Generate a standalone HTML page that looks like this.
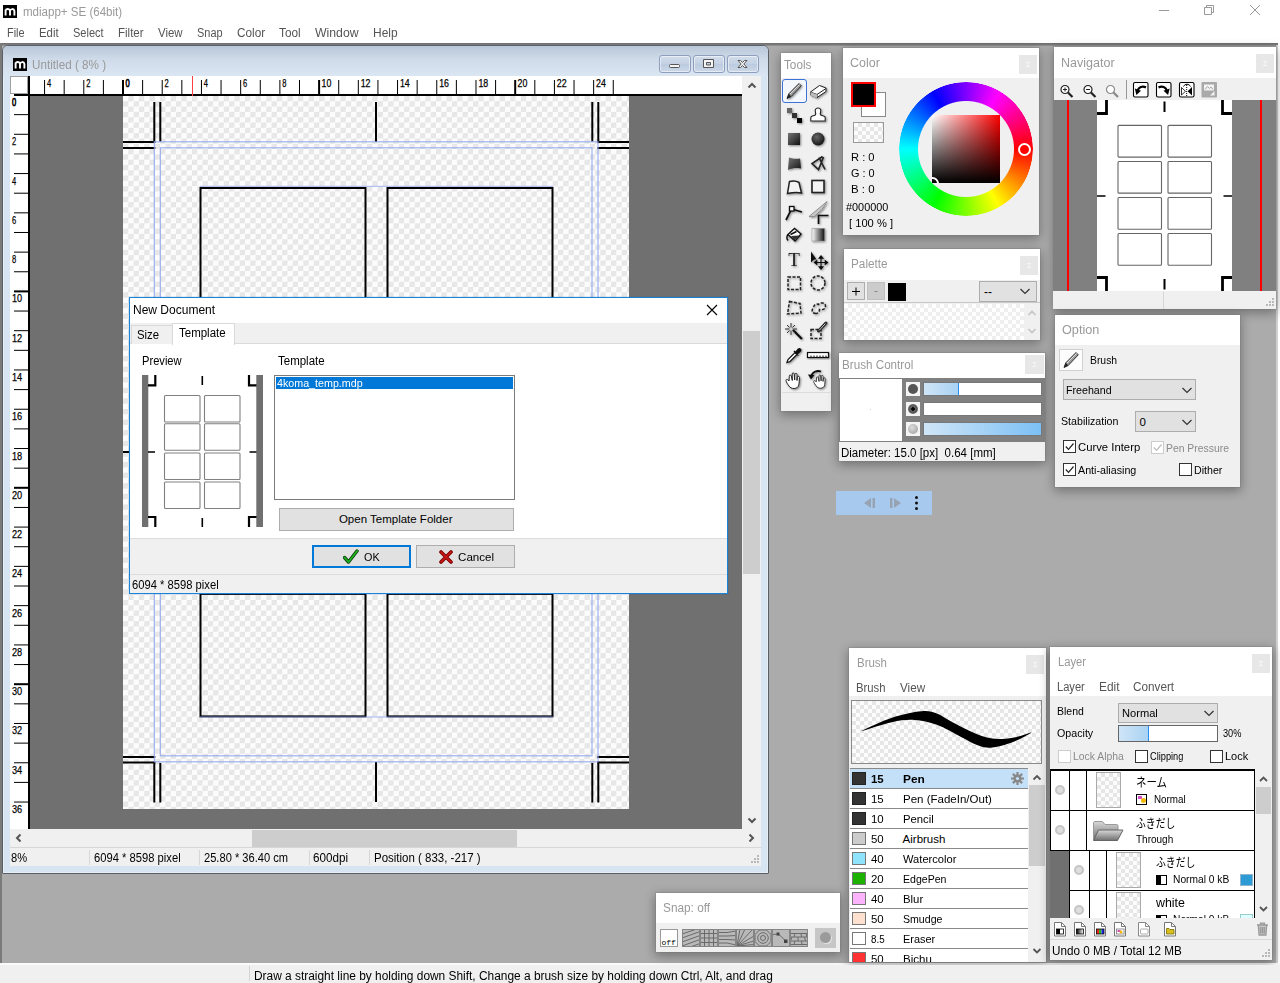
<!DOCTYPE html><html><head><meta charset="utf-8"><title>mdiapp+ SE (64bit)</title><style>
*{box-sizing:border-box;margin:0;padding:0}
html,body{width:1280px;height:983px;overflow:hidden;background:#fff}
body{position:relative;font-family:"Liberation Sans","Noto Sans CJK JP",sans-serif;font-size:12px;color:#000;line-height:1}
.a{position:absolute}
.t{position:absolute;white-space:nowrap;line-height:14px;height:14px}
.panel{position:absolute;background:#f0f0f0;box-shadow:0 0 0 1px rgba(120,120,120,.3),0 3px 10px 1px rgba(0,0,0,.33)}
.pbtn{position:absolute;width:18px;height:19px;background:#e6e6e6}
.combo{position:absolute;background:#e1e1e1;border:1px solid #adadad}
.cb{position:absolute;width:13px;height:13px;background:#fff;border:1px solid #333}
.checker{background-color:#fcfcfc;background-image:linear-gradient(45deg,#e6e6e6 25%,transparent 25%,transparent 75%,#e6e6e6 75%),linear-gradient(45deg,#e6e6e6 25%,transparent 25%,transparent 75%,#e6e6e6 75%)}
</style></head><body>
<svg class="a" style="left:3px;top:5px" width="14" height="13" viewBox="0 0 14 13"><rect width="14" height="13" fill="#000"/><path d="M2.6 10.5V4.6M2.6 5.6C3.2 3.6 6.6 3.4 7 5.8V10.5M7 5.8C7.6 3.6 11 3.4 11.4 5.8V10.5" fill="none" stroke="#fff" stroke-width="1.9"/></svg>
<div class="t" style="left:22.9px;top:5px;font-size:12px;transform-origin:0 0;transform:scaleX(0.962);color:#999">mdiapp+ SE (64bit)</div>
<svg class="a" style="left:1150px;top:0" width="130" height="22" viewBox="0 0 130 22"><g fill="none" stroke="#999" stroke-width="1"><path d="M9 10.5H19"/><path d="M54.5 7.5H61.500V14.5H54.5Z"/><path d="M56.500 7.500V5.500H63.500V12.500H61.500"/><path d="M100 5L110 15M110 5L100 15"/></g></svg>
<div class="t" style="left:6.9px;top:26px;font-size:12px;transform-origin:0 0;transform:scaleX(0.910);color:#555">File</div>
<div class="t" style="left:38.9px;top:26px;font-size:12px;transform-origin:0 0;transform:scaleX(0.948);color:#555">Edit</div>
<div class="t" style="left:72.9px;top:26px;font-size:12px;transform-origin:0 0;transform:scaleX(0.917);color:#555">Select</div>
<div class="t" style="left:117.9px;top:26px;font-size:12px;transform-origin:0 0;transform:scaleX(0.960);color:#555">Filter</div>
<div class="t" style="left:157.9px;top:26px;font-size:12px;transform-origin:0 0;transform:scaleX(0.954);color:#555">View</div>
<div class="t" style="left:196.9px;top:26px;font-size:12px;transform-origin:0 0;transform:scaleX(0.913);color:#555">Snap</div>
<div class="t" style="left:236.9px;top:26px;font-size:12px;transform-origin:0 0;transform:scaleX(0.980);color:#555">Color</div>
<div class="t" style="left:278.9px;top:26px;font-size:12px;transform-origin:0 0;transform:scaleX(0.981);color:#555">Tool</div>
<div class="t" style="left:314.9px;top:26px;font-size:12px;transform-origin:0 0;transform:scaleX(1.022);color:#555">Window</div>
<div class="t" style="left:372.9px;top:26px;font-size:12px;transform-origin:0 0;transform:scaleX(0.997);color:#555">Help</div>
<div class="a" style="left:0px;top:43px;width:1278px;height:920px;background:#ababab"></div>
<div class="a" style="left:0px;top:43px;width:1278px;height:3px;background:linear-gradient(#6e6e6e,#7c7c7c 60%,#9a9a9a)"></div>
<div class="a" style="left:0px;top:43px;width:2px;height:921px;background:#7a7a7a"></div>
<div class="a" style="left:1276px;top:45px;width:2px;height:919px;background:#d0d0d0"></div>
<div class="a" style="left:0px;top:963px;width:1280px;height:2px;background:#fafafa"></div>
<div class="a" style="left:2px;top:45px;width:767px;height:829px;background:#d7e4f2;border:1px solid #5a5f66;border-radius:6px 6px 1px 1px;box-shadow:0 0 0 1px rgba(255,255,255,.35) inset"></div>
<div class="a" style="left:3px;top:46px;width:765px;height:30px;background:linear-gradient(#b8c7d9,#cfdbe9 45%,#dbe6f3);border-radius:5px 5px 0 0"></div>
<svg class="a" style="left:13px;top:58px" width="14" height="13" viewBox="0 0 14 13"><rect width="14" height="13" fill="#000"/><path d="M2.6 10.5V4.6M2.6 5.6C3.2 3.6 6.6 3.4 7 5.8V10.5M7 5.8C7.6 3.6 11 3.4 11.4 5.8V10.5" fill="none" stroke="#fff" stroke-width="1.9"/></svg>
<div class="t" style="left:31.9px;top:58px;font-size:12px;transform-origin:0 0;transform:scaleX(0.975);color:#999">Untitled ( 8% )</div>
<div class="a" style="left:659px;top:55px;width:32px;height:18px;border:1px solid #8e9fbd;border-radius:3px;background:linear-gradient(#d3deec,#c3d1e3 50%,#bccbdf 51%,#cbd8e8);box-shadow:0 0 0 1px rgba(255,255,255,.5) inset"></div>
<div class="a" style="left:693px;top:55px;width:32px;height:18px;border:1px solid #8e9fbd;border-radius:3px;background:linear-gradient(#d3deec,#c3d1e3 50%,#bccbdf 51%,#cbd8e8);box-shadow:0 0 0 1px rgba(255,255,255,.5) inset"></div>
<div class="a" style="left:727px;top:55px;width:32px;height:18px;border:1px solid #8e9fbd;border-radius:3px;background:linear-gradient(#d3deec,#c3d1e3 50%,#bccbdf 51%,#cbd8e8);box-shadow:0 0 0 1px rgba(255,255,255,.5) inset"></div>
<svg class="a" style="left:659px;top:55px" width="100" height="18" viewBox="0 0 100 18" ><g fill="#f4f4f4" stroke="#555" stroke-width="1"><rect x="10.5" y="9.500" width="10" height="3" rx="1"/><path d="M44.500 4.500h10v8h-10zM47.500 7.500h4v2.500h-4z" fill-rule="evenodd"/><path d="M79 5.500h2.500l2 2 2-2h2.500l-3.200 3.500 3.200 3.500h-2.500l-2-2-2 2h-2.500l3.200-3.500z"/></g></svg>
<div class="a" style="left:10px;top:76px;width:751px;height:790px;background:#f0f0f0"></div>
<div class="a" style="left:30px;top:96px;width:712px;height:733px;background:#707070"></div>
<div class="a checker" style="left:123px;top:96px;width:506px;height:713px;background-size:10.62px 10.62px;background-position:0 0,5.31px 5.31px;overflow:hidden">
<svg class="a" style="left:0;top:0" width="506" height="713" viewBox="0 0 506 713"><rect x="30.30000000000001" y="6" width="2" height="41" fill="#000"/><rect x="36.30000000000001" y="6" width="2" height="39.6" fill="#000"/><rect x="0" y="45" width="32.3" height="2" fill="#000"/><rect x="0" y="51" width="32.3" height="2" fill="#000"/><rect x="468.29999999999995" y="6" width="2" height="39.6" fill="#000"/><rect x="474.29999999999995" y="6" width="2" height="41" fill="#000"/><rect x="474.29999999999995" y="45" width="32" height="2" fill="#000"/><rect x="474.29999999999995" y="51" width="32" height="2" fill="#000"/><rect x="30.30000000000001" y="665.5" width="2" height="41" fill="#000"/><rect x="36.30000000000001" y="666.9" width="2" height="39.6" fill="#000"/><rect x="0" y="665.5" width="32.3" height="2" fill="#000"/><rect x="0" y="660" width="32.3" height="2" fill="#000"/><rect x="468.29999999999995" y="666.9" width="2" height="39.6" fill="#000"/><rect x="474.29999999999995" y="665.5" width="2" height="41" fill="#000"/><rect x="474.29999999999995" y="665.5" width="32" height="2" fill="#000"/><rect x="474.29999999999995" y="660" width="32" height="2" fill="#000"/><rect x="252" y="6" width="2" height="40" fill="#000"/><rect x="252" y="666" width="2" height="40" fill="#000"/><rect x="0" y="355" width="32" height="2" fill="#000"/><rect x="474.29999999999995" y="355" width="32" height="2" fill="#000"/><rect x="31.30000000000001" y="45.80000000000001" width="443.7" height="620.0" fill="none" stroke="#8ea6f0" stroke-width="1.15" opacity=".9"/><rect x="37.30000000000001" y="51.80000000000001" width="431.7" height="608.0" fill="none" stroke="#8ea6f0" stroke-width="1.15" opacity=".9"/><rect x="77.5" y="92.0" width="165" height="122.5" fill="none" stroke="#000" stroke-width="2"/><rect x="264.5" y="92.0" width="165" height="122.5" fill="none" stroke="#000" stroke-width="2"/><rect x="77.5" y="227.3" width="165" height="122.5" fill="none" stroke="#000" stroke-width="2"/><rect x="264.5" y="227.3" width="165" height="122.5" fill="none" stroke="#000" stroke-width="2"/><rect x="77.5" y="362.6" width="165" height="122.5" fill="none" stroke="#000" stroke-width="2"/><rect x="264.5" y="362.6" width="165" height="122.5" fill="none" stroke="#000" stroke-width="2"/><rect x="77.5" y="497.9000000000001" width="165" height="122.5" fill="none" stroke="#000" stroke-width="2"/><rect x="264.5" y="497.9000000000001" width="165" height="122.5" fill="none" stroke="#000" stroke-width="2"/><path d="M77 90.30000000000001H430M77 621H430" stroke="#8ea6f0" stroke-width="1" fill="none" opacity=".8"/></svg>
</div>
<div class="a" style="left:10px;top:76px;width:732px;height:20px;background:#fff"></div>
<div class="a" style="left:10px;top:76px;width:20px;height:753px;background:#fff"></div>
<div class="a" style="left:10px;top:76px;width:18px;height:18px;background:#fff;border:1px solid #a0a0a0"></div>
<div class="a" style="left:14px;top:94px;width:728px;height:2px;background:#000"></div>
<div class="a" style="left:28px;top:76px;width:2px;height:753px;background:#000"></div>
<svg class="a" style="left:10px;top:76px;font-family:'Liberation Sans',sans-serif" width="733" height="20" viewBox="0 0 733 20"><rect x="34.06" y="4" width="1" height="14" fill="#000"/><text x="36.96" y="10.6" font-size="11" stroke="#000" stroke-width="0.25" textLength="4.2" lengthAdjust="spacingAndGlyphs">4</text><rect x="53.67" y="4" width="1" height="14" fill="#000"/><rect x="73.28" y="4" width="1" height="14" fill="#000"/><text x="76.18" y="10.6" font-size="11" stroke="#000" stroke-width="0.25" textLength="4.2" lengthAdjust="spacingAndGlyphs">2</text><rect x="92.89" y="4" width="1" height="14" fill="#000"/><rect x="112.00" y="4" width="2" height="14" fill="#000"/><text x="115.40" y="10.6" font-size="11" stroke="#000" stroke-width="0.7" textLength="4.2" lengthAdjust="spacingAndGlyphs">0</text><rect x="132.11" y="4" width="1" height="14" fill="#000"/><rect x="151.72" y="4" width="1" height="14" fill="#000"/><text x="154.62" y="10.6" font-size="11" stroke="#000" stroke-width="0.25" textLength="4.2" lengthAdjust="spacingAndGlyphs">2</text><rect x="171.33" y="4" width="1" height="14" fill="#000"/><rect x="190.94" y="4" width="1" height="14" fill="#000"/><text x="193.84" y="10.6" font-size="11" stroke="#000" stroke-width="0.25" textLength="4.2" lengthAdjust="spacingAndGlyphs">4</text><rect x="210.55" y="4" width="1" height="14" fill="#000"/><rect x="230.16" y="4" width="1" height="14" fill="#000"/><text x="233.06" y="10.6" font-size="11" stroke="#000" stroke-width="0.25" textLength="4.2" lengthAdjust="spacingAndGlyphs">6</text><rect x="249.77" y="4" width="1" height="14" fill="#000"/><rect x="269.38" y="4" width="1" height="14" fill="#000"/><text x="272.28" y="10.6" font-size="11" stroke="#000" stroke-width="0.25" textLength="4.2" lengthAdjust="spacingAndGlyphs">8</text><rect x="288.99" y="4" width="1" height="14" fill="#000"/><rect x="308.10" y="4" width="2" height="14" fill="#000"/><text x="311.50" y="10.6" font-size="11" stroke="#000" stroke-width="0.25" textLength="9.8" lengthAdjust="spacingAndGlyphs">10</text><rect x="328.21" y="4" width="1" height="14" fill="#000"/><rect x="347.82" y="4" width="1" height="14" fill="#000"/><text x="350.72" y="10.6" font-size="11" stroke="#000" stroke-width="0.25" textLength="9.8" lengthAdjust="spacingAndGlyphs">12</text><rect x="367.43" y="4" width="1" height="14" fill="#000"/><rect x="387.04" y="4" width="1" height="14" fill="#000"/><text x="389.94" y="10.6" font-size="11" stroke="#000" stroke-width="0.25" textLength="9.8" lengthAdjust="spacingAndGlyphs">14</text><rect x="406.65" y="4" width="1" height="14" fill="#000"/><rect x="426.26" y="4" width="1" height="14" fill="#000"/><text x="429.16" y="10.6" font-size="11" stroke="#000" stroke-width="0.25" textLength="9.8" lengthAdjust="spacingAndGlyphs">16</text><rect x="445.87" y="4" width="1" height="14" fill="#000"/><rect x="465.48" y="4" width="1" height="14" fill="#000"/><text x="468.38" y="10.6" font-size="11" stroke="#000" stroke-width="0.25" textLength="9.8" lengthAdjust="spacingAndGlyphs">18</text><rect x="485.09" y="4" width="1" height="14" fill="#000"/><rect x="504.20" y="4" width="2" height="14" fill="#000"/><text x="507.60" y="10.6" font-size="11" stroke="#000" stroke-width="0.25" textLength="9.8" lengthAdjust="spacingAndGlyphs">20</text><rect x="524.31" y="4" width="1" height="14" fill="#000"/><rect x="543.92" y="4" width="1" height="14" fill="#000"/><text x="546.82" y="10.6" font-size="11" stroke="#000" stroke-width="0.25" textLength="9.8" lengthAdjust="spacingAndGlyphs">22</text><rect x="563.53" y="4" width="1" height="14" fill="#000"/><rect x="583.14" y="4" width="1" height="14" fill="#000"/><text x="586.04" y="10.6" font-size="11" stroke="#000" stroke-width="0.25" textLength="9.8" lengthAdjust="spacingAndGlyphs">24</text><rect x="602.75" y="4" width="1" height="14" fill="#000"/><rect x="182" y="0" width="1" height="20" fill="#ff4040"/></svg>
<svg class="a" style="left:10px;top:76px;font-family:'Liberation Sans',sans-serif" width="18" height="753" viewBox="0 0 18 753"><text x="2" y="30.00" font-size="11" stroke="#000" stroke-width="0.7" textLength="4.2" lengthAdjust="spacingAndGlyphs">0</text><rect x="4" y="38.14" width="14" height="1" fill="#000"/><rect x="4" y="57.78" width="14" height="1" fill="#000"/><text x="2" y="69.28" font-size="11" stroke="#000" stroke-width="0.25" textLength="4.2" lengthAdjust="spacingAndGlyphs">2</text><rect x="4" y="77.42" width="14" height="1" fill="#000"/><rect x="4" y="97.06" width="14" height="1" fill="#000"/><text x="2" y="108.56" font-size="11" stroke="#000" stroke-width="0.25" textLength="4.2" lengthAdjust="spacingAndGlyphs">4</text><rect x="4" y="116.70" width="14" height="1" fill="#000"/><rect x="4" y="136.34" width="14" height="1" fill="#000"/><text x="2" y="147.84" font-size="11" stroke="#000" stroke-width="0.25" textLength="4.2" lengthAdjust="spacingAndGlyphs">6</text><rect x="4" y="155.98" width="14" height="1" fill="#000"/><rect x="4" y="175.62" width="14" height="1" fill="#000"/><text x="2" y="187.12" font-size="11" stroke="#000" stroke-width="0.25" textLength="4.2" lengthAdjust="spacingAndGlyphs">8</text><rect x="4" y="195.26" width="14" height="1" fill="#000"/><rect x="4" y="214.40" width="14" height="2" fill="#000"/><text x="2" y="226.40" font-size="11" stroke="#000" stroke-width="0.25" textLength="10.2" lengthAdjust="spacingAndGlyphs">10</text><rect x="4" y="234.54" width="14" height="1" fill="#000"/><rect x="4" y="254.18" width="14" height="1" fill="#000"/><text x="2" y="265.68" font-size="11" stroke="#000" stroke-width="0.25" textLength="10.2" lengthAdjust="spacingAndGlyphs">12</text><rect x="4" y="273.82" width="14" height="1" fill="#000"/><rect x="4" y="293.46" width="14" height="1" fill="#000"/><text x="2" y="304.96" font-size="11" stroke="#000" stroke-width="0.25" textLength="10.2" lengthAdjust="spacingAndGlyphs">14</text><rect x="4" y="313.10" width="14" height="1" fill="#000"/><rect x="4" y="332.74" width="14" height="1" fill="#000"/><text x="2" y="344.24" font-size="11" stroke="#000" stroke-width="0.25" textLength="10.2" lengthAdjust="spacingAndGlyphs">16</text><rect x="4" y="352.38" width="14" height="1" fill="#000"/><rect x="4" y="372.02" width="14" height="1" fill="#000"/><text x="2" y="383.52" font-size="11" stroke="#000" stroke-width="0.25" textLength="10.2" lengthAdjust="spacingAndGlyphs">18</text><rect x="4" y="391.66" width="14" height="1" fill="#000"/><rect x="4" y="410.80" width="14" height="2" fill="#000"/><text x="2" y="422.80" font-size="11" stroke="#000" stroke-width="0.25" textLength="10.2" lengthAdjust="spacingAndGlyphs">20</text><rect x="4" y="430.94" width="14" height="1" fill="#000"/><rect x="4" y="450.58" width="14" height="1" fill="#000"/><text x="2" y="462.08" font-size="11" stroke="#000" stroke-width="0.25" textLength="10.2" lengthAdjust="spacingAndGlyphs">22</text><rect x="4" y="470.22" width="14" height="1" fill="#000"/><rect x="4" y="489.86" width="14" height="1" fill="#000"/><text x="2" y="501.36" font-size="11" stroke="#000" stroke-width="0.25" textLength="10.2" lengthAdjust="spacingAndGlyphs">24</text><rect x="4" y="509.50" width="14" height="1" fill="#000"/><rect x="4" y="529.14" width="14" height="1" fill="#000"/><text x="2" y="540.64" font-size="11" stroke="#000" stroke-width="0.25" textLength="10.2" lengthAdjust="spacingAndGlyphs">26</text><rect x="4" y="548.78" width="14" height="1" fill="#000"/><rect x="4" y="568.42" width="14" height="1" fill="#000"/><text x="2" y="579.92" font-size="11" stroke="#000" stroke-width="0.25" textLength="10.2" lengthAdjust="spacingAndGlyphs">28</text><rect x="4" y="588.06" width="14" height="1" fill="#000"/><rect x="4" y="607.20" width="14" height="2" fill="#000"/><text x="2" y="619.20" font-size="11" stroke="#000" stroke-width="0.25" textLength="10.2" lengthAdjust="spacingAndGlyphs">30</text><rect x="4" y="627.34" width="14" height="1" fill="#000"/><rect x="4" y="646.98" width="14" height="1" fill="#000"/><text x="2" y="658.48" font-size="11" stroke="#000" stroke-width="0.25" textLength="10.2" lengthAdjust="spacingAndGlyphs">32</text><rect x="4" y="666.62" width="14" height="1" fill="#000"/><rect x="4" y="686.26" width="14" height="1" fill="#000"/><text x="2" y="697.76" font-size="11" stroke="#000" stroke-width="0.25" textLength="10.2" lengthAdjust="spacingAndGlyphs">34</text><rect x="4" y="705.90" width="14" height="1" fill="#000"/><rect x="4" y="725.54" width="14" height="1" fill="#000"/><text x="2" y="737.04" font-size="11" stroke="#000" stroke-width="0.25" textLength="10.2" lengthAdjust="spacingAndGlyphs">36</text></svg>
<div class="a" style="left:742px;top:76px;width:19px;height:753px;background:#f0f0f0"></div>
<div class="a" style="left:743px;top:331px;width:17px;height:243px;background:#cdcdcd"></div>
<div class="a" style="left:10px;top:829px;width:751px;height:18px;background:#f0f0f0"></div>
<div class="a" style="left:252px;top:830px;width:265px;height:17px;background:#cdcdcd"></div>
<svg class="a" style="left:743px;top:76px" width="18" height="753" viewBox="0 0 18 753" ><path d="M5.500 11.500l3.500-3.500 3.500 3.500M5.500 742.500l3.500 3.500 3.500-3.500" fill="none" stroke="#555" stroke-width="2"/></svg>
<svg class="a" style="left:10px;top:829px" width="751" height="18" viewBox="0 0 751 18" ><path d="M10.500 5.500l-3.500 3.500 3.500 3.500M739.500 5.500l3.500 3.500-3.500 3.500" fill="none" stroke="#555" stroke-width="2"/></svg>
<div class="a" style="left:10px;top:847px;width:751px;height:1px;background:#d7d7d7"></div>
<div class="a" style="left:89px;top:850px;width:1px;height:15px;background:#d7d7d7"></div>
<div class="a" style="left:199px;top:850px;width:1px;height:15px;background:#d7d7d7"></div>
<div class="a" style="left:309px;top:850px;width:1px;height:15px;background:#d7d7d7"></div>
<div class="a" style="left:369px;top:850px;width:1px;height:15px;background:#d7d7d7"></div>
<div class="t" style="left:11.4px;top:851px;font-size:12px;transform-origin:0 0;transform:scaleX(0.928);">8%</div>
<div class="t" style="left:93.9px;top:851px;font-size:12px;transform-origin:0 0;transform:scaleX(0.934);">6094 * 8598 pixel</div>
<div class="t" style="left:203.9px;top:851px;font-size:12px;transform-origin:0 0;transform:scaleX(0.927);">25.80 * 36.40 cm</div>
<div class="t" style="left:313.4px;top:851px;font-size:12px;transform-origin:0 0;transform:scaleX(0.974);">600dpi</div>
<div class="t" style="left:373.9px;top:851px;font-size:12px;transform-origin:0 0;transform:scaleX(0.957);">Position ( 833, -217 )</div>
<svg class="a" style="left:749px;top:854px" width="12" height="12" viewBox="0 0 12 12" ><g fill="#b8b8b8"><rect x="8" y="1" width="2" height="2"/><rect x="5" y="4" width="2" height="2"/><rect x="8" y="4" width="2" height="2"/><rect x="2" y="7" width="2" height="2"/><rect x="5" y="7" width="2" height="2"/><rect x="8" y="7" width="2" height="2"/></g></svg>
<div class="panel" style="left:781px;top:53px;width:50px;height:358px;"></div>
<div class="a" style="left:781px;top:53px;width:50px;height:25px;background:#fff"></div>
<div class="t" style="left:784.1px;top:58px;font-size:12px;transform-origin:0 0;transform:scaleX(0.978);color:#999">Tools</div>
<div class="a" style="left:782px;top:79px;width:25px;height:24px;border:1px solid #3a72d8;border-radius:3px;background:#f4f7fc"></div>
<div class="a" style="left:782px;top:392px;width:48px;height:1px;background:#dcdcdc"></div>
<svg class="a" style="left:781px;top:53px" width="50" height="359" viewBox="0 0 50 359" ><defs><filter id="ds" x="-30%" y="-30%" width="170%" height="170%"><feGaussianBlur in="SourceAlpha" stdDeviation="0.9"/><feOffset dx="1" dy="1.2"/><feComponentTransfer><feFuncA type="linear" slope=".45"/></feComponentTransfer><feMerge><feMergeNode/><feMergeNode in="SourceGraphic"/></feMerge></filter><linearGradient id="gsq" x1="0" y1="0" x2="1" y2="1"><stop offset="0" stop-color="#777"/><stop offset="1" stop-color="#111"/></linearGradient><radialGradient id="gci" cx=".4" cy=".35" r=".7"><stop offset="0" stop-color="#666"/><stop offset="1" stop-color="#111"/></radialGradient><linearGradient id="ggr" x1="0" y1="0" x2="1" y2="0"><stop offset="0" stop-color="#fff"/><stop offset="1" stop-color="#111"/></linearGradient></defs><g transform="translate(3,28)"><g filter="url(#ds)"><path d="M3 17.500l1.800-4.700L15 2.500l2.300 2.300L7.200 15.500z" fill="#9a9a9a" stroke="#222" stroke-width=".9"/><path d="M5.800 13.200L15.600 3.400" stroke="#e8e8e8" stroke-width=".9"/><path d="M3 17.500l1.800-4.700 2.400 2.700z" fill="#222"/></g></g><g transform="translate(27,28)"><g filter="url(#ds)"><path d="M2.500 11l9-6.500 6.500 2.500v3.500l-9 6-6.500-2.500z" fill="#fff" stroke="#222" stroke-width="1"/><path d="M2.500 11l6.500 2.500 9-6M9 13.500v3.500" fill="none" stroke="#222" stroke-width="1"/><path d="M2.500 11l6.500 2.500v3.500l-6.500-2.500z" fill="#bbb"/></g></g><g transform="translate(3,52)"><g filter="url(#ds)"><rect x="3" y="3" width="5" height="5" fill="#666"/><rect x="8" y="8" width="5" height="5" fill="#333"/><rect x="13" y="13" width="5" height="5" fill="#000"/></g></g><g transform="translate(27,52)"><g filter="url(#ds)"><path d="M10 3c2.500 0 3.200 2 2.600 3.800-.5 1.500-.9 2.700.6 3.400l3 1c.8.300 1 .9 1 1.800v3H2.800v-3c0-.9.200-1.500 1-1.800l3-1c1.500-.7 1.100-1.900.6-3.400C6.800 5 7.500 3 10 3z" fill="#fff" stroke="#222" stroke-width="1.1"/></g></g><g transform="translate(3,76)"><g filter="url(#ds)"><rect x="4" y="4" width="12" height="12" fill="url(#gsq)"/></g></g><g transform="translate(27,76)"><g filter="url(#ds)"><circle cx="10" cy="10" r="6.500" fill="url(#gci)"/></g></g><g transform="translate(3,100)"><g filter="url(#ds)"><path d="M5 4.500c4 1.500 7 1.500 11 1l1 10c-4-.8-9-.5-13 1.500z" fill="url(#gsq)"/></g></g><g transform="translate(27,100)"><g filter="url(#ds)"><path d="M14.500 3.500L4 10.500l6.500 6L15.500 4M11 4.500l6 12" fill="none" stroke="#222" stroke-width="1.600"/></g></g><g transform="translate(3,124)"><g filter="url(#ds)"><path d="M5.500 4.500c4-1 7-.5 9.500 1l2.500 10.500c-5-1-9-.5-14 .5z" fill="#f4f4f4" stroke="#222" stroke-width="1.500"/></g></g><g transform="translate(27,124)"><g filter="url(#ds)"><rect x="4" y="3.500" width="12" height="12" fill="#f4f4f4" stroke="#222" stroke-width="1.600"/></g></g><g transform="translate(3,148)"><g filter="url(#ds)"><path d="M2 19L7.500 8l10.500 3" fill="none" stroke="#111" stroke-width="1.700"/><rect x="5.500" y="5.500" width="4.500" height="4.500" fill="#fff" stroke="#111" stroke-width="1.300"/></g></g><g transform="translate(27,148)"><g filter="url(#ds)"><path d="M1 15.500L19 .5l-4.500 7.500-8 7.500z" fill="#c4c4c4" stroke="#777" stroke-width=".7"/><path d="M10.500 23v-8.500h10" fill="none" stroke="#111" stroke-width="1.700"/></g></g><g transform="translate(3,172)"><g filter="url(#ds)"><path d="M4 9.500L10.500 3.500l6.500 5.500-6 7z" fill="#fff" stroke="#111" stroke-width="1.400"/><path d="M4 9.500c-1.500 2-1.500 4 0 6M6.500 9.500l6-3" fill="none" stroke="#111" stroke-width="1.400"/><path d="M7 11l8-.5-4.500 5z" fill="#333"/></g></g><g transform="translate(27,172)"><g filter="url(#ds)"><rect x="4" y="3.500" width="12.500" height="12.500" fill="url(#ggr)" stroke="#888" stroke-width=".5"/></g></g><g transform="translate(3,196)"><g filter="url(#ds)"><text x="10" y="17" font-family="Liberation Serif,serif" font-size="19" text-anchor="middle" fill="#222">T</text></g></g><g transform="translate(27,196)"><g filter="url(#ds)"><path d="M3 2.500v11l3-3 2.500 0z" fill="#111"/><path d="M8 13.500h10M13 8.500v10M13 7l-1.800 2.200h3.600zM13 20l-1.800-2.200h3.600zM6.500 13.500l2.200-1.800v3.600zM19.500 13.500l-2.200-1.800v3.600z" stroke="#111" stroke-width="1.200" fill="#111"/></g></g><g transform="translate(3,220)"><g filter="url(#ds)"><rect x="4" y="4" width="12.500" height="12.500" fill="none" stroke="#222" stroke-width="1.500" stroke-dasharray="3 1.500"/></g></g><g transform="translate(27,220)"><g filter="url(#ds)"><circle cx="10" cy="10" r="7" fill="none" stroke="#222" stroke-width="1.500" stroke-dasharray="3 1.500"/></g></g><g transform="translate(3,244)"><g filter="url(#ds)"><path d="M5.500 4.500l10.500 2 1 9.500-13.500 1z" fill="none" stroke="#222" stroke-width="1.500" stroke-dasharray="3 1.500"/></g></g><g transform="translate(27,244)"><g filter="url(#ds)"><path d="M8 16.500c-4 0-5-3.500-2.500-6 .5-3 3-4 5-3 2-2.500 7-2 7 1.500s-3.500 4-6 3.500c0 2-1.500 4-3.500 4z" fill="none" stroke="#222" stroke-width="1.500" stroke-dasharray="3 1.500"/></g></g><g transform="translate(3,268)"><g filter="url(#ds)"><path d="M9 9l9 9" stroke="#111" stroke-width="2.200"/><path d="M7 2v4.500M7 9.500V14M1 8h4.500M8.500 8H13M3 4l2.500 2.500M8.500 9.500L11 12M11 4L8.500 6.500M5.500 9.500L3 12" stroke="#333" stroke-width="1"/></g></g><g transform="translate(27,268)"><g filter="url(#ds)"><rect x="3" y="8.500" width="10" height="9" fill="none" stroke="#222" stroke-width="1.500" stroke-dasharray="3 1.500"/><path d="M10.500 10L18 2" stroke="#222" stroke-width="3" stroke-linecap="round"/><path d="M11 9.500L17.500 2.500" stroke="#ccc" stroke-width="1"/></g></g><g transform="translate(3,292)"><g filter="url(#ds)"><path d="M3 17.500l1-3 7-7 2 2-7 7z" fill="#fff" stroke="#111" stroke-width="1.200"/><path d="M10 6l4.500 4.500M11.500 7.500l3-3.500c1-1 3 .5 2 2l-3.500 3z" fill="#111" stroke="#111" stroke-width="1.400"/></g></g><g transform="translate(27,292)"><g filter="url(#ds)"><rect x="-.5" y="7.500" width="21" height="5" fill="#fff" stroke="#111" stroke-width="1.200"/><path d="M3 10.500v2M6 10.500v2M9 10.500v2M12 10.500v2M15 10.500v2M18 10.500v2" stroke="#111" stroke-width="1"/></g></g><g transform="translate(3,316)"><g filter="url(#ds)" transform="translate(0,1)"><path d="M5 11c-1.500-2-3-2-3-.5 0 1.500 2 4 3 5.500s2.500 2.500 5 2.500 5-1.500 5-4.500l.5-6.500c0-1.500-2-1.500-2.200 0l-.3 3 0-6c0-1.500-2-1.500-2.100 0l-.2 5.500-.5-6c-.1-1.500-2-1.500-2 0l.1 6.500-1-4.500c-.4-1.500-2.200-1.200-2 .3z" fill="#fff" stroke="#222" stroke-width="1"/></g></g><g transform="translate(27,316)"><g filter="url(#ds)"><g transform="translate(4,3.500) scale(.85)"><path d="M5 11c-1.500-2-3-2-3-.5 0 1.500 2 4 3 5.500s2.500 2.500 5 2.500 5-1.500 5-4.500l.5-6.500c0-1.500-2-1.500-2.200 0l-.3 3 0-6c0-1.500-2-1.500-2.100 0l-.2 5.500-.5-6c-.1-1.500-2-1.500-2 0l.1 6.500-1-4.500c-.4-1.500-2.200-1.200-2 .3z" fill="#fff" stroke="#222" stroke-width="1"/></g><path d="M13 2.500C9 1 4 3 3 8" fill="none" stroke="#111" stroke-width="1.800"/><path d="M0 5.500l3 5 3.500-4.500z" fill="#111"/></g></g></svg>
<div class="panel" style="left:843px;top:48px;width:196px;height:187px;"></div>
<div class="a" style="left:843px;top:48px;width:196px;height:30px;background:#fff"></div>
<div class="t" style="left:850.2px;top:56px;font-size:12px;transform-origin:0 0;transform:scaleX(1.039);color:#999">Color</div>
<div class="a" style="left:1019px;top:55px;width:18px;height:19px;background:#e7e7e7"></div>
<svg class="a" style="left:1019px;top:55px" width="18" height="19" viewBox="0 0 18 19" ><path d="M7 7.500h4M7 11.500h4M9 8v3" stroke="#f5f5f5" stroke-width="1" fill="none"/></svg>
<div class="a" style="left:861px;top:92px;width:25px;height:25px;background:#fff;border:1px solid #888"></div>
<div class="a" style="left:851px;top:82px;width:25px;height:25px;background:#000;border:2px solid #f00"></div>
<div class="a checker" style="left:853px;top:122px;width:31px;height:21px;border:1px solid #999;background-size:8px 8px;background-position:0 0,4px 4px;--c:#ddd"></div>
<div class="t" style="left:851.0px;top:150px;font-size:11.5px;transform-origin:0 0;transform:scaleX(0.968);">R : 0</div>
<div class="t" style="left:851.0px;top:166px;font-size:11.5px;transform-origin:0 0;transform:scaleX(0.943);">G : 0</div>
<div class="t" style="left:851.0px;top:182px;font-size:11.5px;transform-origin:0 0;transform:scaleX(0.994);">B : 0</div>
<div class="t" style="left:846.4px;top:200px;font-size:11.5px;transform-origin:0 0;transform:scaleX(0.945);">#000000</div>
<div class="t" style="left:849.0px;top:216px;font-size:11.5px;transform-origin:0 0;transform:scaleX(0.969);">[ 100 % ]</div>
<div class="a" style="left:899px;top:82px;width:134px;height:134px;border-radius:50%;background:conic-gradient(from 90deg,#f00,#ff0,#0f0,#0ff,#00f,#f0f,#f00);-webkit-mask:radial-gradient(circle,transparent 47.500px,#000 48.500px,#000 66.500px,transparent 67.500px);mask:radial-gradient(circle,transparent 47.500px,#000 48.500px,#000 66.500px,transparent 67.500px)"></div>
<div class="a" style="left:932px;top:115px;width:68px;height:68px;background:linear-gradient(to top,#000,rgba(0,0,0,0)),linear-gradient(to right,#fff,#f00)"></div>
<div class="a" style="left:1017.5px;top:142.5px;width:13px;height:13px;border-radius:50%;border:2.500px solid #fff;background:#f00"></div>
<div class="a" style="left:932px;top:115px;width:68px;height:68px;overflow:hidden"><div class="a" style="left:-6px;top:62px;width:13px;height:13px;border-radius:50%;border:2px solid #fff"></div></div>
<div class="panel" style="left:844px;top:249px;width:196px;height:91px;"></div>
<div class="a" style="left:844px;top:249px;width:196px;height:31px;background:#fff"></div>
<div class="t" style="left:851.4px;top:257px;font-size:12px;transform-origin:0 0;transform:scaleX(0.980);color:#999">Palette</div>
<div class="a" style="left:1020px;top:256px;width:18px;height:19px;background:#e7e7e7"></div>
<svg class="a" style="left:1020px;top:256px" width="18" height="19" viewBox="0 0 18 19" ><path d="M7 7.500h4M7 11.500h4M9 8v3" stroke="#f5f5f5" stroke-width="1" fill="none"/></svg>
<div class="a" style="left:847px;top:282px;width:18px;height:18px;background:#e1e1e1;border:1px solid #adadad"></div>
<svg class="a" style="left:847px;top:282px" width="18" height="18" viewBox="0 0 18 18" ><path d="M5 9.500h8M9 5.500v8" stroke="#000" stroke-width="1"/></svg>
<div class="a" style="left:867px;top:282px;width:18px;height:18px;background:#ccc;border:1px solid #bfbfbf"></div>
<svg class="a" style="left:867px;top:282px" width="18" height="18" viewBox="0 0 18 18" ><path d="M7.500 9.500h3" stroke="#888" stroke-width="1"/></svg>
<div class="a" style="left:888px;top:283px;width:18px;height:18px;background:#000"></div>
<div class="combo" style="left:979px;top:281px;width:58px;height:21px;"></div>
<div class="t" style="left:984px;top:285px;">--</div>
<svg class="a" style="left:1019px;top:287px" width="12" height="9" viewBox="0 0 12 9" ><path d="M1.500 2l4.500 4.500L10.500 2" fill="none" stroke="#333" stroke-width="1.200"/></svg>
<div class="a" style="left:844px;top:302px;width:196px;height:1px;background:#c8c8c8"></div>
<div class="a" style="left:844px;top:304px;width:180px;height:36px;background-color:#fff;background-image:linear-gradient(45deg,#efefef 25%,transparent 25%,transparent 75%,#efefef 75%),linear-gradient(45deg,#efefef 25%,transparent 25%,transparent 75%,#efefef 75%);background-size:8px 8px;background-position:0 0,4px 4px"></div>
<div class="a" style="left:1024px;top:304px;width:16px;height:36px;background:#f0f0f0"></div>
<svg class="a" style="left:1024px;top:304px" width="16" height="36" viewBox="0 0 16 36" ><path d="M4.500 11l3.500-3.500 3.500 3.500M4.500 25l3.500 3.500 3.500-3.500" fill="none" stroke="#c4c4c4" stroke-width="1.600"/></svg>
<div class="panel" style="left:839px;top:353px;width:206px;height:108px;"></div>
<div class="a" style="left:839px;top:353px;width:206px;height:26px;background:#fff"></div>
<div class="t" style="left:841.7px;top:358px;font-size:12px;transform-origin:0 0;transform:scaleX(0.972);color:#999">Brush Control</div>
<div class="a" style="left:1025px;top:355px;width:19px;height:19px;background:#e7e7e7"></div>
<svg class="a" style="left:1025px;top:355px" width="19" height="19" viewBox="0 0 19 19" ><path d="M7.500 7.500h4M7.500 11.500h4M9.500 8v3" stroke="#f5f5f5" stroke-width="1" fill="none"/></svg>
<div class="a" style="left:839px;top:378px;width:206px;height:64px;background:#808080"></div>
<div class="a" style="left:840px;top:379px;width:62px;height:62px;background:#fff"></div>
<div class="a" style="left:870px;top:409px;width:1px;height:1px;background:#ccc"></div>
<div class="a" style="left:906px;top:382px;width:14px;height:14px;background:#f4f4f4"></div>
<div class="a" style="left:922.5px;top:382px;width:119px;height:14px;background:#fff;border:1px solid #777"></div>
<div class="a" style="left:906px;top:402px;width:14px;height:14px;background:#f4f4f4"></div>
<div class="a" style="left:922.5px;top:402px;width:119px;height:14px;background:#fff;border:1px solid #777"></div>
<div class="a" style="left:906px;top:422px;width:14px;height:14px;background:#f4f4f4"></div>
<div class="a" style="left:922.5px;top:422px;width:119px;height:14px;background:#fff;border:1px solid #777"></div>
<div class="a" style="left:908px;top:384px;width:10px;height:10px;border-radius:50%;background:#555"></div>
<div class="a" style="left:908px;top:404px;width:10px;height:10px;border-radius:50%;background:radial-gradient(circle,#000 1.500px,#666 2px,#555 4px,#777 5px)"></div>
<div class="a" style="left:908px;top:424px;width:10px;height:10px;border-radius:50%;background:radial-gradient(circle at 40% 35%,#ddd,#999)"></div>
<div class="a" style="left:923.5px;top:383px;width:35.5px;height:12px;background:linear-gradient(to right,#cfe5f7,#a9d2f3);border-right:1px solid #2a8cf0"></div>
<div class="a" style="left:923.5px;top:423px;width:117px;height:12px;background:linear-gradient(to right,#cfe5f7,#7cc0f5)"></div>
<div class="t" style="left:841.2px;top:445.5px;font-size:12px;transform-origin:0 0;transform:scaleX(0.959);">Diameter: 15.0 [px]&nbsp; 0.64 [mm]</div>
<div class="a" style="left:836px;top:491px;width:96px;height:24px;background:#a8c9ee"></div>
<svg class="a" style="left:836px;top:491px" width="96" height="24" viewBox="0 0 96 24" ><g fill="#97a3b3"><path d="M28 12l7-5v10zM36.500 7h2.500v10h-2.500z"/><path d="M65 12l-7-5v10zM56.500 7h-2.500v10h2.500z"/></g><g fill="#111"><circle cx="80.500" cy="6.500" r="1.500"/><circle cx="80.500" cy="12" r="1.500"/><circle cx="80.500" cy="17.500" r="1.500"/></g></svg>
<div class="panel" style="left:1054px;top:47px;width:222px;height:262px;"></div>
<div class="a" style="left:1054px;top:47px;width:222px;height:31px;background:#fff"></div>
<div class="t" style="left:1061.4px;top:56px;font-size:12px;transform-origin:0 0;transform:scaleX(1.044);color:#999">Navigator</div>
<div class="a" style="left:1256px;top:54px;width:18px;height:19px;background:#e7e7e7"></div>
<svg class="a" style="left:1256px;top:54px" width="18" height="19" viewBox="0 0 18 19" ><path d="M7 7.500h4M7 11.500h4M9 8v3" stroke="#f5f5f5" stroke-width="1" fill="none"/></svg>
<svg class="a" style="left:1053.5px;top:78px" width="223" height="22" viewBox="0 0 223 22" ><g transform="translate(12.5,13)"><circle cx="-1.500" cy="-1.500" r="4" fill="#fff" stroke="#222" stroke-width="1.200"/><path d="M1.500 1.500L6 6" stroke="#222" stroke-width="2.200"/><path d="M-3.500-1.500h4M-1.500-3.500v4" stroke="#222" stroke-width="1"/></g><g transform="translate(35.5,13)"><circle cx="-1.500" cy="-1.500" r="4" fill="#fff" stroke="#222" stroke-width="1.200"/><path d="M1.500 1.500L6 6" stroke="#222" stroke-width="2.200"/><path d="M-3.500-1.500h4" stroke="#222" stroke-width="1"/></g><g transform="translate(58,13)"><circle cx="-1.500" cy="-1.500" r="4" fill="#fff" stroke="#888" stroke-width="1.200"/><path d="M1.500 1.500L6 6" stroke="#888" stroke-width="2.200"/></g><path d="M72.500 2v19" stroke="#999" stroke-width="1"/><rect x="79.5" y="4.500" width="14.500" height="14.500" rx="1.500" fill="#fff" stroke="#000" stroke-width="1.100"/><rect x="102.5" y="4.500" width="14.500" height="14.500" rx="1.500" fill="#fff" stroke="#000" stroke-width="1.100"/><rect x="125.5" y="4.500" width="14.500" height="14.500" rx="1.500" fill="#fff" stroke="#000" stroke-width="1.100"/><path d="M92 9.500c-3.500-1.800-7.500-.5-8.500 3.500" fill="none" stroke="#000" stroke-width="2.200"/><path d="M80.800 10.500l6.200 2.200-4.600 4.300z" fill="#000"/><path d="M104.500 9.500c3.500-1.800 7.500-.5 8.500 3.500" fill="none" stroke="#000" stroke-width="2.200"/><path d="M115.700 10.500l-6.200 2.200 4.600 4.300z" fill="#000"/><path d="M132.700 7v11" stroke="#000" stroke-width="1" stroke-dasharray="1 1"/><path d="M127.500 9.500v7.500l4-3.700z" fill="#fff" stroke="#000" stroke-width=".8"/><path d="M138 9v8.500l-4.300-4.200z" fill="#000"/><path d="M129.500 8.500c1.500-3 5.500-3 7 0" fill="none" stroke="#000" stroke-width="1"/><rect x="147.500" y="4" width="15.500" height="15.500" rx="1" fill="#a9a9a9"/><path d="M150 6.500h10v6h-10z" fill="#f2f2f2"/><path d="M151 11.500l2.500-3 2 2 1.500-1.500 2 2.500" fill="none" stroke="#a9a9a9" stroke-width="1"/><path d="M160.500 17.500h-4.500l4.500-4.500z" fill="#f2f2f2"/></svg>
<div class="a" style="left:1053px;top:100px;width:223px;height:191px;background:#808080"></div>
<div class="a" style="left:1067.3px;top:100px;width:1.8px;height:191px;background:#f00"></div>
<div class="a" style="left:1259.8px;top:100px;width:1.8px;height:191px;background:#f00"></div>
<svg class="a" style="left:1097px;top:100px" width="135" height="191" viewBox="0 0 135 191" ><rect x="0" y="0" width="135" height="191" fill="#fff"/><path d="M0 13.500H9.500V0M135 13.500H125.500V0M0 177.500H9.500V191M135 177.500H125.500V191" fill="none" stroke="#000" stroke-width="2.800"/><path d="M67.500 1.500V12M67.500 179V189.500" fill="none" stroke="#000" stroke-width="2"/><path d="M0 96H8.500M126.500 96H135" fill="none" stroke="#000" stroke-width="1.600"/><rect x="21" y="25.40" width="43.500" height="31.700" fill="none" stroke="#666" stroke-width="1.100" rx="1"/><rect x="21" y="61.45" width="43.500" height="31.700" fill="none" stroke="#666" stroke-width="1.100" rx="1"/><rect x="21" y="97.50" width="43.500" height="31.700" fill="none" stroke="#666" stroke-width="1.100" rx="1"/><rect x="21" y="133.55" width="43.500" height="31.700" fill="none" stroke="#666" stroke-width="1.100" rx="1"/><rect x="71" y="25.40" width="43.500" height="31.700" fill="none" stroke="#666" stroke-width="1.100" rx="1"/><rect x="71" y="61.45" width="43.500" height="31.700" fill="none" stroke="#666" stroke-width="1.100" rx="1"/><rect x="71" y="97.50" width="43.500" height="31.700" fill="none" stroke="#666" stroke-width="1.100" rx="1"/><rect x="71" y="133.55" width="43.500" height="31.700" fill="none" stroke="#666" stroke-width="1.100" rx="1"/></svg>
<div class="a" style="left:1053px;top:291px;width:223px;height:18px;background:#f0f0f0"></div>
<div class="a" style="left:1163px;top:292px;width:1px;height:17px;background:#d7d7d7"></div>
<svg class="a" style="left:1264px;top:297px" width="12" height="12" viewBox="0 0 12 12" ><g fill="#b8b8b8"><rect x="8" y="1" width="2" height="2"/><rect x="5" y="4" width="2" height="2"/><rect x="8" y="4" width="2" height="2"/><rect x="2" y="7" width="2" height="2"/><rect x="5" y="7" width="2" height="2"/><rect x="8" y="7" width="2" height="2"/></g></svg>
<div class="panel" style="left:1055px;top:315px;width:185px;height:172px;"></div>
<div class="a" style="left:1055px;top:315px;width:185px;height:30px;background:#fff"></div>
<div class="t" style="left:1062.4px;top:323px;font-size:12px;transform-origin:0 0;transform:scaleX(1.055);color:#999">Option</div>
<div class="a" style="left:1059px;top:349px;width:24px;height:22px;background:#fdfdfd;border:1px solid #d0d0d0"></div>
<svg class="a" style="left:1061px;top:350px" width="20" height="20" viewBox="0 0 20 20" ><path d="M3 17.500l1.800-4.700L15 2.500l2.300 2.300L7.200 15.500z" fill="#9a9a9a" stroke="#222" stroke-width=".9"/><path d="M5.800 13.200L15.600 3.400" stroke="#e8e8e8" stroke-width=".9"/><path d="M3 17.500l1.800-4.700 2.400 2.700z" fill="#222"/></svg>
<div class="t" style="left:1089.9px;top:353px;font-size:11.5px;transform-origin:0 0;transform:scaleX(0.902);">Brush</div>
<div class="combo" style="left:1063px;top:379px;width:133px;height:21px;"></div>
<div class="t" style="left:1065.9px;top:383px;font-size:11.5px;transform-origin:0 0;transform:scaleX(0.926);">Freehand</div>
<svg class="a" style="left:1181px;top:386px" width="12" height="9" viewBox="0 0 12 9" ><path d="M1.500 2l4.500 4.500L10.500 2" fill="none" stroke="#333" stroke-width="1.200"/></svg>
<div class="t" style="left:1061.4px;top:414px;font-size:11.5px;transform-origin:0 0;transform:scaleX(0.926);">Stabilization</div>
<div class="combo" style="left:1135px;top:411px;width:61px;height:21px;"></div>
<div class="t" style="left:1139.5px;top:415px;font-size:11.5px">0</div>
<svg class="a" style="left:1181px;top:418px" width="12" height="9" viewBox="0 0 12 9" ><path d="M1.500 2l4.500 4.500L10.500 2" fill="none" stroke="#333" stroke-width="1.200"/></svg>
<div class="a" style="left:1063px;top:440px;width:13px;height:13px;background:#fff;border:1px solid #333"></div>
<svg class="a" style="left:1063px;top:440px" width="13" height="13" viewBox="0 0 13 13" ><path d="M2.800 6.500l2.700 2.800 5-5.800" fill="none" stroke="#222" stroke-width="1.200"/></svg>
<div class="t" style="left:1078.1px;top:440px;font-size:11.5px;transform-origin:0 0;transform:scaleX(0.983);">Curve Interp</div>
<div class="a" style="left:1151px;top:441px;width:13px;height:13px;background:#fff;border:1px solid #ccc"></div>
<svg class="a" style="left:1151px;top:441px" width="13" height="13" viewBox="0 0 13 13" ><path d="M2.800 6.500l2.700 2.800 5-5.800" fill="none" stroke="#bbb" stroke-width="1.200"/></svg>
<div class="t" style="left:1166.1px;top:441px;font-size:11.5px;transform-origin:0 0;transform:scaleX(0.903);color:#8a8a8a">Pen Pressure</div>
<div class="a" style="left:1063px;top:463px;width:13px;height:13px;background:#fff;border:1px solid #333"></div>
<svg class="a" style="left:1063px;top:463px" width="13" height="13" viewBox="0 0 13 13" ><path d="M2.800 6.500l2.700 2.800 5-5.800" fill="none" stroke="#222" stroke-width="1.200"/></svg>
<div class="t" style="left:1078.1px;top:463px;font-size:11.5px;transform-origin:0 0;transform:scaleX(0.931);">Anti-aliasing</div>
<div class="a" style="left:1179px;top:463px;width:13px;height:13px;background:#fff;border:1px solid #333"></div>
<div class="t" style="left:1194.4px;top:463px;font-size:11.5px;transform-origin:0 0;transform:scaleX(0.926);">Dither</div>
<div class="panel" style="left:849px;top:648px;width:197px;height:314px;"></div>
<div class="a" style="left:849px;top:648px;width:197px;height:48px;background:#fff"></div>
<div class="t" style="left:856.7px;top:656px;font-size:12px;transform-origin:0 0;transform:scaleX(0.957);color:#999">Brush</div>
<div class="a" style="left:1026px;top:655px;width:18px;height:19px;background:#e7e7e7"></div>
<svg class="a" style="left:1026px;top:655px" width="18" height="19" viewBox="0 0 18 19" ><path d="M7 7.500h4M7 11.500h4M9 8v3" stroke="#f5f5f5" stroke-width="1" fill="none"/></svg>
<div class="t" style="left:855.8px;top:681px;font-size:12px;transform-origin:0 0;transform:scaleX(0.941);color:#555">Brush</div>
<div class="t" style="left:899.6px;top:681px;font-size:12px;transform-origin:0 0;transform:scaleX(0.973);color:#555">View</div>
<div class="a checker" style="left:851px;top:700px;width:191px;height:64px;border:1px solid #8a8a8a;background-size:8px 8px;background-position:0 0,4px 4px"></div>
<svg class="a" style="left:851px;top:700px" width="191" height="64" viewBox="0 0 191 64" ><path d="M10.6 30.8C15.6 28.6 30.9 21.1 40.9 17.8C50.8 14.6 62.8 12.0 70.3 11.3C77.8 10.6 81.0 11.8 85.9 13.5C90.8 15.2 94.0 18.3 99.7 21.3C105.5 24.3 113.5 28.8 120.4 31.7C127.3 34.6 134.3 37.6 141.2 38.6C148.1 39.6 155.5 38.7 162.0 37.7C168.5 36.7 177.1 33.4 180.1 32.5L180.1 32.9C177.1 34.4 168.5 39.5 162.0 42.0C155.5 44.5 147.0 47.0 141.2 47.6C135.4 48.2 132.6 47.3 127.4 45.5C122.2 43.7 117.0 40.4 110.1 36.9C103.2 33.4 93.7 27.5 85.9 24.7C78.1 21.9 70.9 20.3 63.4 19.9C55.9 19.5 49.7 20.3 40.9 22.2C32.1 24.1 15.6 29.6 10.6 31.1z" fill="#000"/></svg>
<div class="a" style="left:849px;top:766px;width:197px;height:196px;background:#f0f0f0"></div>
<div class="a" style="left:0;top:0;width:1280px;height:962px;overflow:hidden">
<div class="a" style="left:850px;top:768px;width:178px;height:196px;background:#fff"></div>
<div class="a" style="left:850px;top:769px;width:178px;height:19px;background:#c3e0f8"></div>
<div class="a" style="left:850px;top:768px;width:178px;height:1px;background:#8a8a8a"></div>
<div class="a" style="left:852px;top:772px;width:14px;height:13px;background:#333;border:1px solid #222"></div>
<div class="t" style="left:871.1px;top:772px;font-size:11.5px;transform-origin:0 0;transform:scaleX(0.993);font-weight:bold;">15</div>
<div class="t" style="left:902.6px;top:772px;font-size:11.5px;transform-origin:0 0;transform:scaleX(1.034);font-weight:bold;">Pen</div>
<div class="a" style="left:850px;top:788px;width:178px;height:1px;background:#8a8a8a"></div>
<div class="a" style="left:852px;top:792px;width:14px;height:13px;background:#333;border:1px solid #222"></div>
<div class="t" style="left:871.1px;top:792px;font-size:11.5px;transform-origin:0 0;transform:scaleX(0.993);">15</div>
<div class="t" style="left:902.6px;top:792px;font-size:11.5px;transform-origin:0 0;transform:scaleX(1.001);">Pen (FadeIn/Out)</div>
<div class="a" style="left:850px;top:808px;width:178px;height:1px;background:#8a8a8a"></div>
<div class="a" style="left:852px;top:812px;width:14px;height:13px;background:#333;border:1px solid #222"></div>
<div class="t" style="left:871.1px;top:812px;font-size:11.5px;transform-origin:0 0;transform:scaleX(0.993);">10</div>
<div class="t" style="left:902.6px;top:812px;font-size:11.5px;transform-origin:0 0;transform:scaleX(0.983);">Pencil</div>
<div class="a" style="left:850px;top:828px;width:178px;height:1px;background:#8a8a8a"></div>
<div class="a" style="left:852px;top:832px;width:14px;height:13px;background:#ccc;border:1px solid #777"></div>
<div class="t" style="left:871.1px;top:832px;font-size:11.5px;transform-origin:0 0;transform:scaleX(0.993);">50</div>
<div class="t" style="left:902.6px;top:832px;font-size:11.5px;transform-origin:0 0;transform:scaleX(1.000);">Airbrush</div>
<div class="a" style="left:850px;top:848px;width:178px;height:1px;background:#8a8a8a"></div>
<div class="a" style="left:852px;top:852px;width:14px;height:13px;background:#8fe3fb;border:1px solid #777"></div>
<div class="t" style="left:871.1px;top:852px;font-size:11.5px;transform-origin:0 0;transform:scaleX(0.993);">40</div>
<div class="t" style="left:902.6px;top:852px;font-size:11.5px;transform-origin:0 0;transform:scaleX(0.968);">Watercolor</div>
<div class="a" style="left:850px;top:868px;width:178px;height:1px;background:#8a8a8a"></div>
<div class="a" style="left:852px;top:872px;width:14px;height:13px;background:#1db100;border:1px solid #777"></div>
<div class="t" style="left:871.1px;top:872px;font-size:11.5px;transform-origin:0 0;transform:scaleX(0.993);">20</div>
<div class="t" style="left:902.6px;top:872px;font-size:11.5px;transform-origin:0 0;transform:scaleX(0.917);">EdgePen</div>
<div class="a" style="left:850px;top:888px;width:178px;height:1px;background:#8a8a8a"></div>
<div class="a" style="left:852px;top:892px;width:14px;height:13px;background:#fbb4fb;border:1px solid #777"></div>
<div class="t" style="left:871.1px;top:892px;font-size:11.5px;transform-origin:0 0;transform:scaleX(0.993);">40</div>
<div class="t" style="left:902.6px;top:892px;font-size:11.5px;transform-origin:0 0;transform:scaleX(0.988);">Blur</div>
<div class="a" style="left:850px;top:908px;width:178px;height:1px;background:#8a8a8a"></div>
<div class="a" style="left:852px;top:912px;width:14px;height:13px;background:#fde0cd;border:1px solid #777"></div>
<div class="t" style="left:871.1px;top:912px;font-size:11.5px;transform-origin:0 0;transform:scaleX(0.993);">50</div>
<div class="t" style="left:902.6px;top:912px;font-size:11.5px;transform-origin:0 0;transform:scaleX(0.920);">Smudge</div>
<div class="a" style="left:850px;top:928px;width:178px;height:1px;background:#8a8a8a"></div>
<div class="a" style="left:852px;top:932px;width:14px;height:13px;background:#fff;border:1px solid #777"></div>
<div class="t" style="left:871.1px;top:932px;font-size:11.5px;transform-origin:0 0;transform:scaleX(0.851);">8.5</div>
<div class="t" style="left:902.6px;top:932px;font-size:11.5px;transform-origin:0 0;transform:scaleX(0.951);">Eraser</div>
<div class="a" style="left:850px;top:948px;width:178px;height:1px;background:#8a8a8a"></div>
<div class="a" style="left:852px;top:952px;width:14px;height:13px;background:#f33;border:1px solid #777"></div>
<div class="t" style="left:871.1px;top:952px;font-size:11.5px;transform-origin:0 0;transform:scaleX(0.993);">50</div>
<div class="t" style="left:902.6px;top:952px;font-size:11.5px;transform-origin:0 0;transform:scaleX(1.001);">Bichu</div>
<svg class="a" style="left:1011px;top:772px" width="13" height="13" viewBox="0 0 13 13" ><g fill="#888"><circle cx="6.500" cy="6.500" r="4"/><g stroke="#888" stroke-width="2.200"><path d="M6.500 0v13M0 6.500h13M1.900 1.900l9.200 9.200M11.100 1.900l-9.200 9.200"/></g></g><circle cx="6.500" cy="6.500" r="1.600" fill="#c3e0f8"/></svg>
<div class="a" style="left:1028px;top:768px;width:18px;height:198px;background:#f0f0f0"></div>
<div class="a" style="left:1029px;top:785px;width:16px;height:81px;background:#cdcdcd"></div>
<svg class="a" style="left:1028px;top:768px" width="18" height="198" viewBox="0 0 18 198" ><path d="M5.500 11.500l3.500-3.500 3.500 3.500M5.500 181l3.500 3.500 3.500-3.500" fill="none" stroke="#555" stroke-width="1.800"/></svg>
</div>
<div class="panel" style="left:1050px;top:647px;width:222px;height:313px;"></div>
<div class="a" style="left:1050px;top:647px;width:222px;height:49px;background:#fff"></div>
<div class="t" style="left:1057.9px;top:655px;font-size:12px;transform-origin:0 0;transform:scaleX(0.936);color:#999">Layer</div>
<div class="a" style="left:1252px;top:654px;width:18px;height:19px;background:#e7e7e7"></div>
<svg class="a" style="left:1252px;top:654px" width="18" height="19" viewBox="0 0 18 19" ><path d="M7 7.500h4M7 11.500h4M9 8v3" stroke="#f5f5f5" stroke-width="1" fill="none"/></svg>
<div class="t" style="left:1056.8px;top:680px;font-size:12px;transform-origin:0 0;transform:scaleX(0.926);color:#555">Layer</div>
<div class="t" style="left:1098.7px;top:680px;font-size:12px;transform-origin:0 0;transform:scaleX(0.991);color:#555">Edit</div>
<div class="t" style="left:1132.9px;top:680px;font-size:12px;transform-origin:0 0;transform:scaleX(0.978);color:#555">Convert</div>
<div class="t" style="left:1056.8px;top:704px;font-size:10.5px;transform-origin:0 0;transform:scaleX(0.998);">Blend</div>
<div class="combo" style="left:1118px;top:703px;width:100px;height:20px;"></div>
<div class="t" style="left:1121.7px;top:706px;font-size:11.5px;transform-origin:0 0;transform:scaleX(0.966);">Normal</div>
<svg class="a" style="left:1203px;top:709px" width="12" height="9" viewBox="0 0 12 9" ><path d="M1.500 2l4.500 4.500L10.500 2" fill="none" stroke="#333" stroke-width="1.200"/></svg>
<div class="t" style="left:1056.8px;top:726px;font-size:10.5px;transform-origin:0 0;transform:scaleX(1.017);">Opacity</div>
<div class="a" style="left:1118px;top:725px;width:100px;height:17px;background:#fff;border:1px solid #666"></div>
<div class="a" style="left:1119px;top:726px;width:30px;height:15px;background:linear-gradient(to right,#cfe5f7,#a9d2f3);border-right:1px solid #2a8cf0"></div>
<div class="t" style="left:1223.2px;top:726px;font-size:10.5px;transform-origin:0 0;transform:scaleX(0.876);">30%</div>
<div class="a" style="left:1058px;top:750px;width:13px;height:13px;background:#fff;border:1px solid #ccc"></div>
<div class="t" style="left:1072.9px;top:749px;font-size:10.5px;transform-origin:0 0;transform:scaleX(0.989);color:#8a8a8a">Lock Alpha</div>
<div class="a" style="left:1135px;top:750px;width:13px;height:13px;background:#fff;border:1px solid #333"></div>
<div class="t" style="left:1150.4px;top:749px;font-size:10.5px;transform-origin:0 0;transform:scaleX(0.878);">Clipping</div>
<div class="a" style="left:1210px;top:750px;width:13px;height:13px;background:#fff;border:1px solid #333"></div>
<div class="t" style="left:1225.4px;top:749px;font-size:10.5px;transform-origin:0 0;transform:scaleX(1.046);">Lock</div>
<div class="a" style="left:1050px;top:769px;width:222px;height:149px;overflow:hidden;background:#808080">
<div class="a" style="left:0px;top:0px;width:205px;height:82px;background:#000"></div>
<div class="a" style="left:19px;top:82px;width:186px;height:67px;background:#000"></div>
<div class="a" style="left:0px;top:82px;width:19px;height:67px;background:#707070"></div>
<div class="a" style="left:1px;top:2px;width:203px;height:39px;background:#fff"></div>
<div class="a" style="left:19px;top:2px;width:1px;height:39px;background:#000"></div>
<div class="a" style="left:36px;top:2px;width:1px;height:39px;background:#000"></div>
<div class="a" style="left:5px;top:16px;width:10px;height:10px;border-radius:50%;background:#dedede;border:2.500px solid #c6c6c6"></div>
<div class="a checker" style="left:46px;top:3px;width:25px;height:36px;border:1px solid #aaa;background-size:8px 8px;background-position:0 0,4px 4px"></div>
<div class="t" style="left:86px;top:7px;font-size:12.5px;transform-origin:0 0;transform:scaleX(0.835)">ネーム</div>
<div class="a" style="left:86px;top:25px;width:11px;height:11px;background:#fff;border:1px solid #000"></div>
<div class="a" style="left:88px;top:27px;width:4px;height:3px;background:#d050c0"></div>
<div class="a" style="left:91px;top:29px;width:5px;height:5px;background:#f5b800;border-radius:50%"></div>
<div class="t" style="left:103.70000000000005px;top:23px;transform-origin:0 0;transform:scaleX(0.937);font-size:10.5px;">Normal</div>
<div class="a" style="left:1px;top:42px;width:203px;height:39px;background:#fff"></div>
<div class="a" style="left:19px;top:42px;width:1px;height:39px;background:#000"></div>
<div class="a" style="left:36px;top:42px;width:1px;height:39px;background:#000"></div>
<div class="a" style="left:5px;top:56px;width:10px;height:10px;border-radius:50%;background:#dedede;border:2.500px solid #c6c6c6"></div>
<svg class="a" style="left:42px;top:51px" width="33" height="23" viewBox="0 0 33 23"><defs><linearGradient id="fg" x1="0" y1="0" x2="0" y2="1"><stop offset="0" stop-color="#d8d8d8"/><stop offset="1" stop-color="#707070"/></linearGradient></defs><path d="M1.500 20V3c0-1 .5-1.500 1.500-1.500h7.500l2.500 3h11.500c1 0 1.500.5 1.500 1.500v4" fill="url(#fg)" stroke="#9a9a9a" stroke-width="1"/><path d="M1.500 20.500l5-10.500h24.500l-5.500 10.500z" fill="url(#fg)" stroke="#666" stroke-width="1"/></svg>
<div class="t" style="left:86px;top:48px;font-size:12.5px;transform-origin:0 0;transform:scaleX(0.786)">ふきだし</div>
<div class="t" style="left:86px;top:63px;transform-origin:0 0;transform:scaleX(0.951);font-size:10.5px;">Through</div>
<div class="a" style="left:20px;top:82px;width:184px;height:39px;background:#fff"></div>
<div class="a" style="left:39px;top:82px;width:1px;height:39px;background:#000"></div>
<div class="a" style="left:56px;top:82px;width:1px;height:39px;background:#000"></div>
<div class="a" style="left:24px;top:96px;width:10px;height:10px;border-radius:50%;background:#dedede;border:2.500px solid #c6c6c6"></div>
<div class="a checker" style="left:66px;top:83px;width:25px;height:36px;border:1px solid #aaa;background-size:8px 8px;background-position:0 0,4px 4px"></div>
<div class="a" style="left:20px;top:122px;width:184px;height:39px;background:#fff"></div>
<div class="a" style="left:39px;top:122px;width:1px;height:39px;background:#000"></div>
<div class="a" style="left:56px;top:122px;width:1px;height:39px;background:#000"></div>
<div class="a" style="left:24px;top:136px;width:10px;height:10px;border-radius:50%;background:#dedede;border:2.500px solid #c6c6c6"></div>
<div class="a checker" style="left:66px;top:123px;width:25px;height:36px;border:1px solid #aaa;background-size:8px 8px;background-position:0 0,4px 4px"></div>
<div class="t" style="left:105.79999999999995px;top:87px;font-size:12.5px;transform-origin:0 0;transform:scaleX(0.788)">ふきだし</div>
<div class="a" style="left:106px;top:106px;width:11px;height:10px;background:#fff;border:1px solid #000"></div>
<div class="a" style="left:106px;top:106px;width:5px;height:10px;background:#000"></div>
<div class="t" style="left:123.20000000000005px;top:103px;transform-origin:0 0;transform:scaleX(0.973);font-size:10.5px;">Normal 0 kB</div>
<div class="a" style="left:190px;top:105px;width:13px;height:12px;background:#2d9bd6;border:1px solid #8fb6cc"></div>
<div class="t" style="left:105.79999999999995px;top:127px;transform-origin:0 0;transform:scaleX(1.032);font-size:12px;">white</div>
<div class="a" style="left:106px;top:146px;width:11px;height:10px;background:#fff;border:1px solid #000"></div>
<div class="a" style="left:106px;top:146px;width:5px;height:10px;background:#000"></div>
<div class="t" style="left:123.20000000000005px;top:143px;transform-origin:0 0;transform:scaleX(0.973);font-size:10.5px;">Normal 0 kB</div>
<div class="a" style="left:190px;top:145px;width:13px;height:12px;background:#dff;border:1px solid #9cc"></div>
<div class="a" style="left:205px;top:0px;width:17px;height:149px;background:#f0f0f0"></div>
<div class="a" style="left:206px;top:18px;width:15px;height:27px;background:#cdcdcd"></div>
<svg class="a" style="left:205px;top:0" width="17" height="149" viewBox="0 0 17 149"><path d="M5 12l3.500-3.500 3.500 3.500M5 138l3.500 3.500 3.500-3.500" fill="none" stroke="#555" stroke-width="1.800"/></svg>
</div>
<svg class="a" style="left:1050px;top:916px" width="222" height="24" viewBox="0 0 222 24" ><g transform="translate(4,0)"><path d="M.5 6.500h7l4 4v9.500h-11z" fill="#fff" stroke="#777" stroke-width="1"/><path d="M7.500 6.500v4h4" fill="none" stroke="#777" stroke-width="1"/><rect x="2.500" y="13" width="7" height="5" fill="#fff" stroke="#000" stroke-width=".8"/><rect x="2.500" y="13" width="3.500" height="5" fill="#000"/></g><g transform="translate(24,0)"><path d="M.5 6.500h7l4 4v9.500h-11z" fill="#fff" stroke="#777" stroke-width="1"/><path d="M7.500 6.500v4h4" fill="none" stroke="#777" stroke-width="1"/><defs><linearGradient id="lg8" x1="0" x2="1"><stop offset="0" stop-color="#000"/><stop offset="1" stop-color="#fff"/></linearGradient></defs><rect x="2.500" y="13" width="7" height="5" fill="url(#lg8)" stroke="#000" stroke-width=".8"/></g><g transform="translate(44,0)"><path d="M.5 6.500h7l4 4v9.500h-11z" fill="#fff" stroke="#777" stroke-width="1"/><path d="M7.500 6.500v4h4" fill="none" stroke="#777" stroke-width="1"/><rect x="2.500" y="13" width="2.500" height="5" fill="#e22"/><rect x="5" y="13" width="2.500" height="5" fill="#2b2"/><rect x="7.500" y="13" width="2.500" height="5" fill="#22e"/><rect x="2.500" y="13" width="7.500" height="5" fill="none" stroke="#000" stroke-width=".8"/></g><g transform="translate(64,0)"><path d="M.5 6.500h7l4 4v9.500h-11z" fill="#fff" stroke="#777" stroke-width="1"/><path d="M7.500 6.500v4h4" fill="none" stroke="#777" stroke-width="1"/><rect x="2.500" y="13" width="7.500" height="5" fill="#fff" stroke="#777" stroke-width=".8"/><rect x="3.500" y="14" width="3" height="2" fill="#d050c0"/><circle cx="7" cy="16" r="1.500" fill="#f5b800"/></g><g transform="translate(88,0)"><path d="M.5 6.500h7l4 4v9.500h-11z" fill="#fff" stroke="#888" stroke-width="1"/><path d="M7.500 6.500v4h4" fill="none" stroke="#888" stroke-width="1"/><rect x="2.500" y="13" width="7.500" height="5" fill="#fff" stroke="#999" stroke-width=".8" rx="1"/></g><g transform="translate(114,0)"><path d="M.5 6.500h7l4 4v9.500h-11z" fill="#fff" stroke="#777" stroke-width="1"/><path d="M7.500 6.500v4h4" fill="none" stroke="#777" stroke-width="1"/><path d="M2.500 18v-5.500h2.500l1 1h4v4.500z" fill="#d8c020" stroke="#776a00" stroke-width=".8"/></g><g transform="translate(206.500,6)" fill="none" stroke="#999" stroke-width="1.300"><path d="M.5 3h11M4 3v-1.800h4v1.800M1.800 3l.8 10h6.800l.8-10" fill="#c8c8c8"/><path d="M4.200 5v6.500M6 5v6.500M7.800 5v6.500"/></g></svg>
<div class="a" style="left:1050px;top:939px;width:222px;height:1px;background:#d8d8d8"></div>
<div class="t" style="left:1052.4px;top:944px;font-size:12px;transform-origin:0 0;transform:scaleX(0.975);">Undo 0 MB / Total 12 MB</div>
<svg class="a" style="left:1260px;top:948px" width="12" height="12" viewBox="0 0 12 12" ><g fill="#b8b8b8"><rect x="8" y="1" width="2" height="2"/><rect x="5" y="4" width="2" height="2"/><rect x="8" y="4" width="2" height="2"/><rect x="2" y="7" width="2" height="2"/><rect x="5" y="7" width="2" height="2"/><rect x="8" y="7" width="2" height="2"/></g></svg>
<div class="panel" style="left:656px;top:893px;width:184px;height:59px;"></div>
<div class="a" style="left:656px;top:893px;width:184px;height:30px;background:#fff"></div>
<div class="t" style="left:663.4px;top:901px;font-size:12px;transform-origin:0 0;transform:scaleX(0.985);color:#999">Snap: off</div>
<div class="a" style="left:660px;top:929px;width:18px;height:18px;background:#fff;border:1px solid #999"></div>
<div class="t" style="left:661.500px;top:936px;font-family:'Liberation Mono',monospace;font-size:8px;letter-spacing:0">off</div>
<svg class="a" style="left:682px;top:929px" width="126" height="18" viewBox="0 0 126 18" ><rect x="0" y="0" width="126" height="18" fill="#b9b9b9"/><svg x="0" y="0" width="18" height="18" viewBox="0 0 18 18"><g fill="none" stroke="#6a6a6a" stroke-width="1"><path d="M0 5l18-6M0 9l18-6.500M0 13l18-6.500M0 17l18-6.500M4 19.500l14-5M12 20l6-2"/></g><rect x=".5" y=".5" width="17" height="17" fill="none" stroke="#858585" stroke-width="1"/></svg><svg x="18" y="0" width="18" height="18" viewBox="0 0 18 18"><g fill="none" stroke="#6a6a6a" stroke-width="1"><path d="M4.500 0v18M9 0v18M13.500 0v18M0 4.500h18M0 9h18M0 13.500h18"/></g><rect x=".5" y=".5" width="17" height="17" fill="none" stroke="#858585" stroke-width="1"/></svg><svg x="36" y="0" width="18" height="18" viewBox="0 0 18 18"><g fill="none" stroke="#6a6a6a" stroke-width="1"><path d="M0 3.500h9l9-1.500M0 7h9l9-.5M0 10.500h9l9 .5M0 14h9l9 2"/></g><rect x=".5" y=".5" width="17" height="17" fill="none" stroke="#858585" stroke-width="1"/></svg><svg x="54" y="0" width="18" height="18" viewBox="0 0 18 18"><g fill="none" stroke="#6a6a6a" stroke-width="1"><path d="M1 17L4 0M1 17L9 0M1 17L17 0M1 17L18 7M1 17L18 12M1 17L18 15.500"/></g><rect x=".5" y=".5" width="17" height="17" fill="none" stroke="#858585" stroke-width="1"/></svg><svg x="72" y="0" width="18" height="18" viewBox="0 0 18 18"><g fill="none" stroke="#6a6a6a" stroke-width="1"><circle cx="9" cy="9" r="2.500"/><circle cx="9" cy="9" r="5.300"/><path d="M5.500 1h7l4.500 4.500v7l-4.500 4.500h-7l-4.500-4.500v-7z"/></g><rect x=".5" y=".5" width="17" height="17" fill="none" stroke="#858585" stroke-width="1"/></svg><svg x="90" y="0" width="18" height="18" viewBox="0 0 18 18"><g fill="none" stroke="#6a6a6a" stroke-width="1"><path d="M1 5.500c5-1 9 1 13 8"/></g><rect x="4.500" y="3.500" width="3" height="3" fill="#444"/><rect x="12" y="10.500" width="3.500" height="3.500" fill="#444"/><rect x=".5" y=".5" width="17" height="17" fill="none" stroke="#858585" stroke-width="1"/></svg><svg x="108" y="0" width="18" height="18" viewBox="0 0 18 18"><g fill="none" stroke="#6a6a6a" stroke-width="1"><path d="M0 4.500h18M0 8h18M0 12h18M0 15.500h18M5 4.500l-1 3.500M11 4.500l.5 3.500M16 4.500l1 3.500M2 8l-1.500 4M8 8v4M14.500 8l1 4M5 12l-1 3.500M11.500 12l.5 3.500"/></g><rect x=".5" y=".5" width="17" height="17" fill="none" stroke="#858585" stroke-width="1"/></svg></svg>
<div class="a" style="left:815px;top:928px;width:21px;height:20px;background:#c6c6c6"></div>
<div class="a" style="left:820px;top:932px;width:11px;height:11px;border-radius:50%;background:#9b9b9b;box-shadow:1px 1px 0 #e4e4e4"></div>
<div class="a" style="left:129px;top:297px;width:599px;height:297px;background:#fff;border:1px solid #1883d7;box-shadow:0 0 0 1px rgba(0,90,180,.10)"></div>
<div class="t" style="left:132.9px;top:303px;font-size:12px;transform-origin:0 0;transform:scaleX(1.001);">New Document</div>
<svg class="a" style="left:706px;top:304px" width="12" height="12" viewBox="0 0 12 12" ><path d="M1 1L11 11M11 1L1 11" stroke="#000" stroke-width="1.1" fill="none"/></svg>
<div class="a" style="left:130px;top:323px;width:597px;height:21px;background:#f0f0f0"></div>
<div class="a" style="left:130px;top:343px;width:597px;height:1px;background:#d9d9d9"></div>
<div class="a" style="left:131px;top:325px;width:42px;height:19px;background:#f0f0f0;border:1px solid #d9d9d9;border-bottom:none"></div>
<div class="a" style="left:172px;top:323px;width:63px;height:22px;background:#fff;border:1px solid #d9d9d9;border-bottom:none"></div>
<div class="t" style="left:136.9px;top:328px;font-size:12px;transform-origin:0 0;transform:scaleX(0.947);">Size</div>
<div class="t" style="left:179.4px;top:326px;font-size:12px;transform-origin:0 0;transform:scaleX(0.957);">Template</div>
<div class="t" style="left:141.9px;top:354px;font-size:12px;transform-origin:0 0;transform:scaleX(0.928);">Preview</div>
<div class="t" style="left:277.9px;top:354px;font-size:12px;transform-origin:0 0;transform:scaleX(0.957);">Template</div>
<svg class="a" style="left:142px;top:375px" width="121" height="152" viewBox="0 0 121 152" ><rect x="0" y="0" width="121" height="152" fill="#fff"/><rect x="0" y="0" width="6.3" height="152" fill="#707070"/><rect x="114.3" y="0" width="6.7" height="152" fill="#707070"/><path d="M6 10.300H13.300V0M114.500 10.300H107V0M6 142H13.300V152M114.500 142H107V152" fill="none" stroke="#000" stroke-width="2.2"/><path d="M60.300 1V10M60.300 143V152" stroke="#000" stroke-width="1.6" fill="none"/><path d="M6 77H13M107.500 77H114.500" stroke="#000" stroke-width="1.4" fill="none"/><rect x="22.5" y="20.5" width="35.500" height="26.500" fill="none" stroke="#808080" stroke-width="1.1" rx="1"/><rect x="22.5" y="48.8" width="35.500" height="26.500" fill="none" stroke="#808080" stroke-width="1.1" rx="1"/><rect x="22.5" y="78" width="35.500" height="26.500" fill="none" stroke="#808080" stroke-width="1.1" rx="1"/><rect x="22.5" y="107" width="35.500" height="26.500" fill="none" stroke="#808080" stroke-width="1.1" rx="1"/><rect x="62.5" y="20.5" width="35.500" height="26.500" fill="none" stroke="#808080" stroke-width="1.1" rx="1"/><rect x="62.5" y="48.8" width="35.500" height="26.500" fill="none" stroke="#808080" stroke-width="1.1" rx="1"/><rect x="62.5" y="78" width="35.500" height="26.500" fill="none" stroke="#808080" stroke-width="1.1" rx="1"/><rect x="62.5" y="107" width="35.500" height="26.500" fill="none" stroke="#808080" stroke-width="1.1" rx="1"/></svg>
<div class="a" style="left:274px;top:375px;width:241px;height:125px;background:#fff;border:1px solid #7a7a7a"></div>
<div class="a" style="left:276px;top:377px;width:237px;height:12px;background:#0078d7"></div>
<div class="t" style="left:276.9px;top:376px;font-size:11.5px;transform-origin:0 0;transform:scaleX(0.930);color:#fff">4koma_temp.mdp</div>
<div class="a" style="left:279px;top:508px;width:235px;height:23px;background:#e1e1e1;border:1px solid #adadad"></div>
<div class="t" style="left:338.9px;top:512px;font-size:11.5px;transform-origin:0 0;transform:scaleX(1.000);">Open Template Folder</div>
<div class="a" style="left:130px;top:538px;width:597px;height:55px;background:#f0f0f0"></div>
<div class="a" style="left:130px;top:538px;width:597px;height:1px;background:#dcdcdc"></div>
<div class="a" style="left:130px;top:574px;width:597px;height:1px;background:#dcdcdc"></div>
<div class="a" style="left:312px;top:545px;width:99px;height:23px;background:#e1e1e1;border:2px solid #0078d7"></div>
<div class="a" style="left:416px;top:545px;width:99px;height:23px;background:#e1e1e1;border:1px solid #adadad"></div>
<svg class="a" style="left:343px;top:549px" width="16" height="15" viewBox="0 0 16 15" ><path d="M1.500 8.500l4 4.500L14 2" fill="none" stroke="#0a3d0a" stroke-width="3.4" stroke-linecap="round" stroke-linejoin="round"/><path d="M1.500 8.500l4 4.500L14 2" fill="none" stroke="#1fb51f" stroke-width="1.8" stroke-linecap="round" stroke-linejoin="round"/></svg>
<div class="t" style="left:364.4px;top:550px;font-size:11.5px;transform-origin:0 0;transform:scaleX(0.939);">OK</div>
<svg class="a" style="left:439px;top:550px" width="14" height="14" viewBox="0 0 14 14" ><path d="M2 2L12 12M12 2L2 12" fill="none" stroke="#7d0000" stroke-width="3.6" stroke-linecap="round"/><path d="M2 2L12 12M12 2L2 12" fill="none" stroke="#d01818" stroke-width="1.6" stroke-linecap="round"/></svg>
<div class="t" style="left:457.9px;top:550px;font-size:11.5px;transform-origin:0 0;transform:scaleX(1.009);">Cancel</div>
<div class="t" style="left:131.9px;top:578px;font-size:12px;transform-origin:0 0;transform:scaleX(0.934);">6094 * 8598 pixel</div>
<div class="a" style="left:0px;top:965px;width:1280px;height:18px;background:#f0f0f0"></div>
<div class="a" style="left:249px;top:966px;width:1px;height:15px;background:#d5d5d5"></div>
<div class="t" style="left:253.9px;top:969px;font-size:12px;transform-origin:0 0;transform:scaleX(0.992);">Draw a straight line by holding down Shift, Change a brush size by holding down Ctrl, Alt, and drag</div>
</body></html>
